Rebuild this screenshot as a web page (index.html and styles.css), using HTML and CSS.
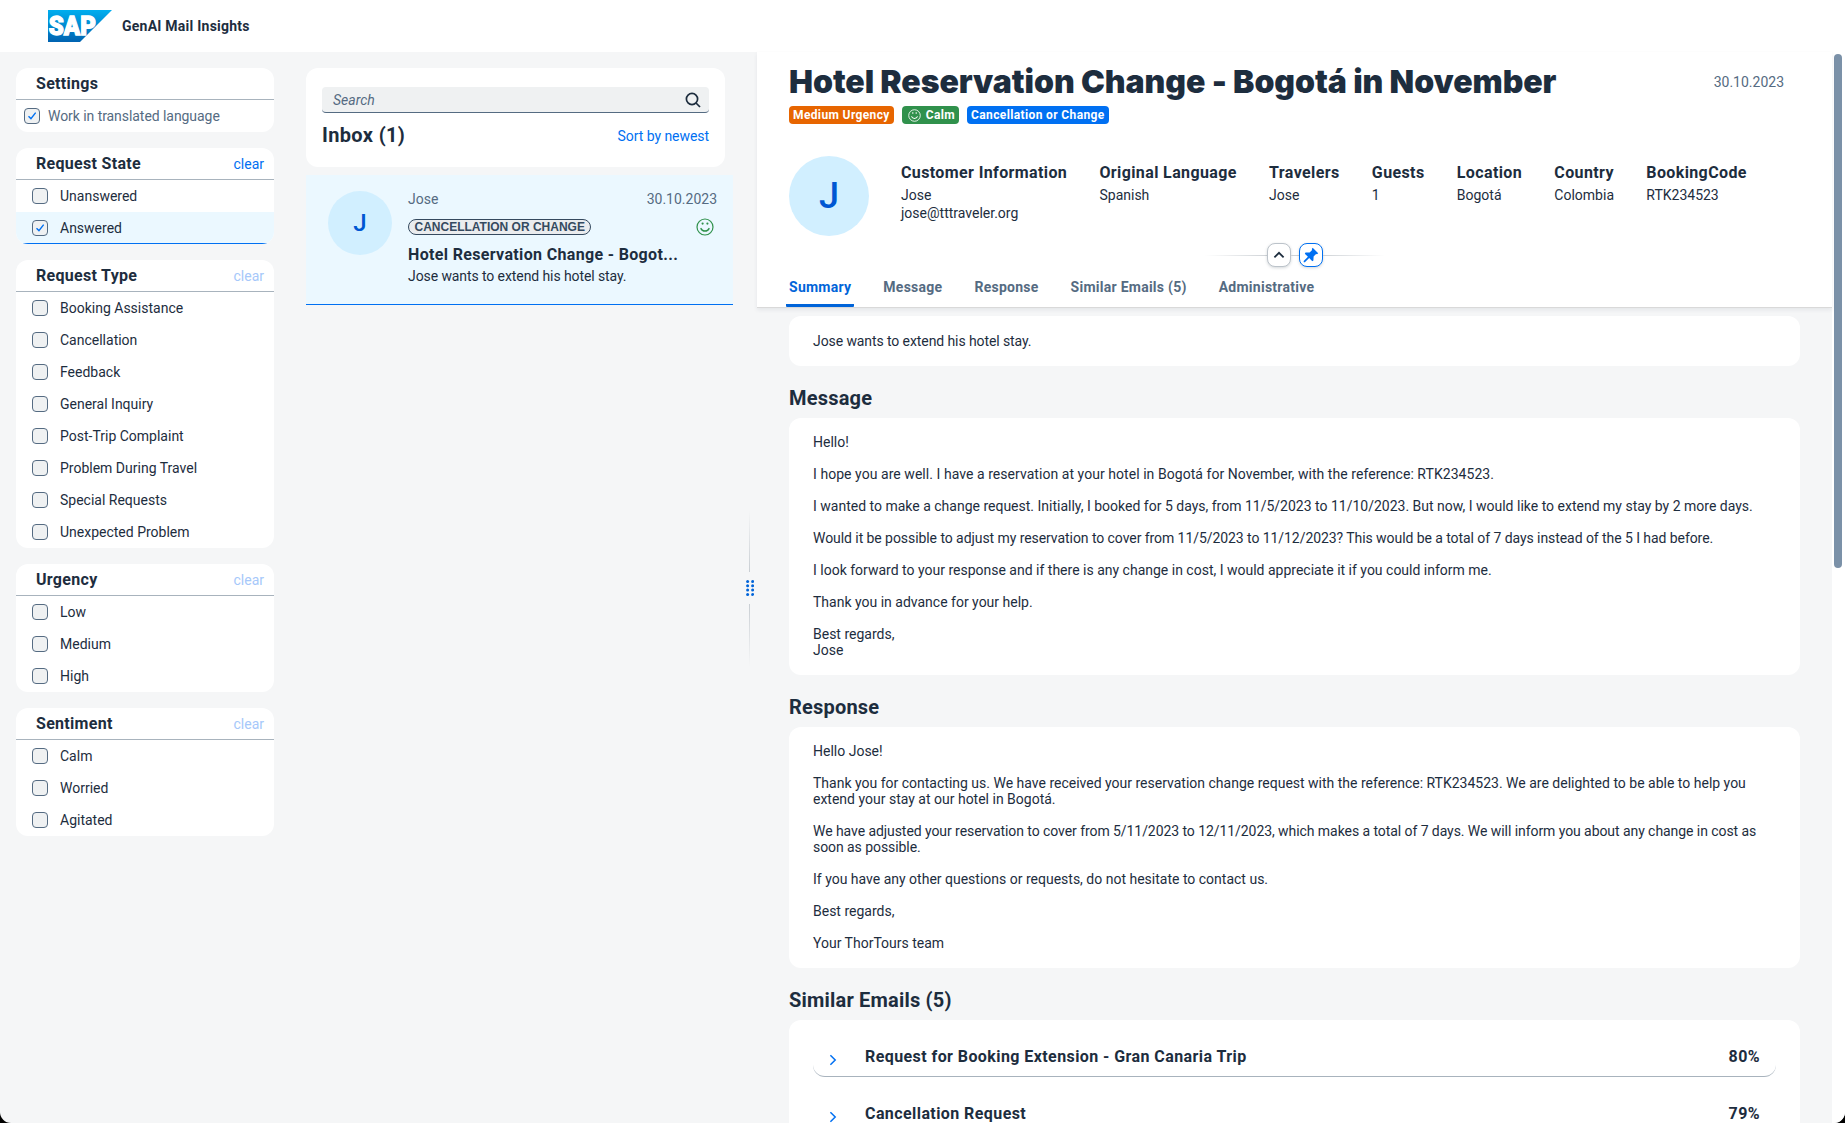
FILE: index.html
```html
<!DOCTYPE html>
<html lang="en">
<head>
<meta charset="utf-8">
<title>GenAI Mail Insights</title>
<link rel="stylesheet" href="styles.css">
</head>
<body>
<svg class="defs" width="0" height="0" aria-hidden="true">
  <symbol id="check" viewBox="0 0 16 16"><path d="M4 8.3 6.8 11 12.2 4.2" fill="none" stroke="#0070f2" stroke-width="1.6"/></symbol>
  <symbol id="smile" viewBox="0 0 18 18"><g fill="none" stroke="currentColor" stroke-width="1.2"><circle cx="9" cy="9" r="8"/><path d="M5 10.6c1.4 3.2 6.6 3.2 8 0" stroke-width="1.4" stroke-linecap="round"/></g><g fill="currentColor"><circle cx="6.6" cy="5.6" r="1.1"/><circle cx="11.4" cy="5.6" r="1.1"/></g></symbol>
  <symbol id="chevron" viewBox="0 0 8 12"><path d="M1.4 1.2 6.2 6 1.4 10.8" fill="none" stroke="#0070f2" stroke-width="1.5"/></symbol>
</svg>
<div class="app">
  <header class="shell">
    <svg class="logo" viewBox="0 0 64 32" width="64" height="32">
      <defs><linearGradient id="g" x1="0" y1="0" x2="0" y2="1"><stop offset="0" stop-color="#00aeef"/><stop offset="1" stop-color="#0063b1"/></linearGradient></defs>
      <path d="M0 0h64L32 32H0z" fill="url(#g)"/>
      <text x="0.8" y="25.300" textLength="47" lengthAdjust="spacingAndGlyphs" class="logo-text">SAP</text>
    </svg>
    <span class="app-name">GenAI Mail Insights</span>
  </header>
  <div class="body">
    <aside class="filters">
      <section class="card">
        <h2>Settings</h2>
        <label class="setting"><span class="box"><svg><use href="#check"/></svg></span>Work in translated language</label>
      </section>
      <section class="card">
        <h2>Request State <a>clear</a></h2>
        <ul><li><span class="box"></span>Unanswered</li><li class="on"><span class="box"><svg><use href="#check"/></svg></span>Answered</li></ul>
      </section>
      <section class="card">
        <h2>Request Type <a class="off">clear</a></h2>
        <ul><li><span class="box"></span>Booking Assistance</li><li><span class="box"></span>Cancellation</li><li><span class="box"></span>Feedback</li><li><span class="box"></span>General Inquiry</li><li><span class="box"></span>Post-Trip Complaint</li><li><span class="box"></span>Problem During Travel</li><li><span class="box"></span>Special Requests</li><li><span class="box"></span>Unexpected Problem</li></ul>
      </section>
      <section class="card">
        <h2>Urgency <a class="off">clear</a></h2>
        <ul><li><span class="box"></span>Low</li><li><span class="box"></span>Medium</li><li><span class="box"></span>High</li></ul>
      </section>
      <section class="card">
        <h2>Sentiment <a class="off">clear</a></h2>
        <ul><li><span class="box"></span>Calm</li><li><span class="box"></span>Worried</li><li><span class="box"></span>Agitated</li></ul>
      </section>
    </aside>
    <div class="inbox">
      <div class="inbox-head">
        <div class="search"><span>Search</span><svg width="16" height="16" viewBox="0 0 16 16" fill="none" stroke="#1d2d3e" stroke-width="1.7"><circle cx="7" cy="7" r="5.6"/><path d="M11 11l4 4"/></svg></div>
        <div class="inbox-row"><h1>Inbox (1)</h1><a>Sort by newest</a></div>
      </div>
      <article class="mail">
        <div class="avatar small">J</div>
        <div class="mail-main">
          <div class="meta"><span>Jose</span><span class="date">30.10.2023</span></div>
          <div class="kind"><span class="badge">CANCELLATION OR CHANGE</span><svg class="smile"><use href="#smile"/></svg></div>
          <h3>Hotel Reservation Change - Bogot...</h3>
          <p>Jose wants to extend his hotel stay.</p>
        </div>
      </article>
    </div>
    <div class="splitter">
      <i class="line up"></i>
      <svg width="8" height="16" viewBox="0 0 8 16" fill="#0064d9"><circle cx="1.6" cy="1.5" r="1.5"/><circle cx="6.6" cy="1.5" r="1.5"/><circle cx="1.6" cy="5.8" r="1.5"/><circle cx="6.6" cy="5.8" r="1.5"/><circle cx="1.6" cy="10.1" r="1.5"/><circle cx="6.6" cy="10.1" r="1.5"/><circle cx="1.6" cy="14.4" r="1.5"/><circle cx="6.6" cy="14.4" r="1.5"/></svg>
      <i class="line down"></i>
    </div>
    <main class="detail">
      <div class="detail-head">
        <div class="title-row"><h1>Hotel Reservation Change - Bogotá in November</h1><span class="date">30.10.2023</span></div>
        <div class="tags"><span class="tag urgent">Medium Urgency</span><span class="tag calm"><svg><use href="#smile"/></svg>Calm</span><span class="tag change">Cancellation or Change</span></div>
        <div class="customer">
          <div class="avatar">J</div>
          <dl>
            <div><dt>Customer Information</dt><dd>Jose<br>jose@tttraveler.org</dd></div>
            <div><dt>Original Language</dt><dd>Spanish</dd></div>
            <div><dt>Travelers</dt><dd>Jose</dd></div>
            <div><dt>Guests</dt><dd>1</dd></div>
            <div><dt>Location</dt><dd>Bogotá</dd></div>
            <div><dt>Country</dt><dd>Colombia</dd></div>
            <div><dt>BookingCode</dt><dd>RTK234523</dd></div>
          </dl>
        </div>
        <div class="pinbar">
          <i class="fade left"></i>
          <button><svg width="12" height="12" viewBox="0 0 12 12"><path d="M1.4 8.4 6 3.8l4.600 4.600" fill="none" stroke="#1d2d3e" stroke-width="1.8"/></svg></button>
          <i class="mid"></i>
          <button class="pin"><svg width="16" height="16" viewBox="0 0 16 16"><path d="M9.700.8 15.200 6.300 14 7.200 13.100 6.900 10.600 9.400 10.400 13.600 9.300 14.200 6.200 11.100 1.900 15.300.7 15.300.7 14.100 4.900 9.800 1.800 6.700 2.500 5.600 6.600 5.400 9.100 2.900 8.800 2z" fill="#0070f2"/></svg></button>
          <i class="fade right"></i>
        </div>
        <nav><a class="active">Summary</a><a>Message</a><a>Response</a><a>Similar Emails (5)</a><a>Administrative</a></nav>
      </div>
      <div class="content">
        <section class="panel">Jose wants to extend his hotel stay.</section>
        <h2>Message</h2>
        <section class="panel">
          <p>Hello!</p>
          <p class="loose">I hope you are well. I have a reservation at your hotel in Bogotá for November, with the reference: RTK234523.</p>
          <p>I wanted to make a change request. Initially, I booked for 5 days, from 11/5/2023 to 11/10/2023. But now, I would like to extend my stay by 2 more days.</p>
          <p class="tight">Would it be possible to adjust my reservation to cover from 11/5/2023 to 11/12/2023? This would be a total of 7 days instead of the 5 I had before.</p>
          <p>I look forward to your response and if there is any change in cost, I would appreciate it if you could inform me.</p>
          <p>Thank you in advance for your help.</p>
          <p>Best regards,<br>Jose</p>
        </section>
        <h2>Response</h2>
        <section class="panel">
          <p>Hello Jose!</p>
          <p>Thank you for contacting us. We have received your reservation change request with the reference: RTK234523. We are delighted to be able to help you<br>extend your stay at our hotel in Bogotá.</p>
          <p class="tight">We have adjusted your reservation to cover from 5/11/2023 to 12/11/2023, which makes a total of 7 days. We will inform you about any change in cost as<br>soon as possible.</p>
          <p>If you have any other questions or requests, do not hesitate to contact us.</p>
          <p>Best regards,</p>
          <p>Your ThorTours team</p>
        </section>
        <h2>Similar Emails (5)</h2>
        <section class="panel similar">
          <div class="sim"><svg width="8" height="12"><use href="#chevron"/></svg><b>Request for Booking Extension - Gran Canaria Trip</b><b class="pct">80%</b></div>
          <div class="sim"><svg width="8" height="12"><use href="#chevron"/></svg><b>Cancellation Request</b><b class="pct">79%</b></div>
        </section>
      </div>
    </main>
    <div class="scrollbar"><div class="thumb"></div></div>
  </div>
</div>
</body>
</html>
```
FILE: styles.css
```css
* { box-sizing: border-box; margin: 0; padding: 0; }
html { background: #000; }
body { font: 14px/16px Roboto, "Liberation Sans", sans-serif; color: #1d2d3e; overflow: hidden; }
ul { list-style: none; }
a { color: #0070f2; }
svg { display: block; flex: none; }
.defs { position: absolute; }

.app { height: 1123px; display: flex; flex-direction: column; background: #f5f6f7; border-radius: 0 0 11px 11px; overflow: hidden; }
.shell { flex: none; height: 52px; background: #fff; display: flex; align-items: center; gap: 10px; padding-left: 48px; }
.logo-text { font: 900 26px Roboto, sans-serif; fill: #fff; stroke: #fff; stroke-width: 1.3px; }
.app-name { font-weight: 700; letter-spacing: .24px; }
.body { flex: 1; min-height: 0; display: flex; }

.filters { width: 306px; padding: 16px 32px 0 16px; display: flex; flex-direction: column; gap: 16px; }
.card { background: #fff; border-radius: 12px; overflow: hidden; }
.card h2 { height: 32px; display: flex; justify-content: space-between; align-items: center; padding: 0 10px 0 20px; border-bottom: 1px solid #a8b3bd; font-size: 16px; letter-spacing: .3px; }
.card h2 a { font-size: 14px; font-weight: 400; letter-spacing: 0; padding-top: 1px; }
.card h2 .off { color: #a6c8fa; }
.card li { height: 32px; display: flex; align-items: center; gap: 12px; padding-left: 16px; }
.card li.on { background: #ebf8ff; border-bottom: 1px solid #0070f2; }
.setting { height: 32px; display: flex; align-items: center; gap: 8px; padding-left: 8px; color: #556b82; letter-spacing: -.06px; }
.box { width: 16px; height: 16px; border: 1px solid #556b82; border-radius: 4px; background: #eff1f2; }
.box svg { width: 14px; height: 14px; }

.inbox { width: 427px; padding-top: 16px; display: flex; flex-direction: column; gap: 8px; }
.inbox-head { width: 419px; height: 99px; padding: 19px 16px 0; background: #fff; border-radius: 12px; }
.search { height: 26px; display: flex; align-items: center; justify-content: space-between; padding: 0 8px 0 11px; background: #eff1f2; border-bottom: 1px solid #556b82; border-radius: 4px; color: #556b82; font-style: italic; }
.inbox-row { display: flex; justify-content: space-between; align-items: center; margin-top: 10px; }
.inbox-row h1 { font-size: 20px; line-height: 24px; letter-spacing: .35px; }
.inbox-row a { padding-top: 2px; letter-spacing: -.05px; }
.mail { height: 130px; display: flex; gap: 16px; padding: 16px 16px 0 22px; background: #ebf8ff; border-bottom: 1px solid #0070f2; }
.avatar { flex: none; width: 80px; height: 80px; border-radius: 50%; background: #d1efff; color: #0057d2; font-size: 36px; font-weight: 500; display: flex; align-items: center; justify-content: center; }
.avatar.small { width: 64px; height: 64px; font-size: 24px; }
.mail-main { flex: 1; }
.meta, .kind { display: flex; justify-content: space-between; align-items: center; }
.meta { color: #556b82; }
.kind { height: 18px; margin: 11px 0 9px; }
.smile { width: 18px; height: 18px; color: #30914c; margin-right: 3px; }
.badge { height: 16px; border: 1px solid #354a5f; border-radius: 8px; padding: 0 5.5px; background: #eaecee; color: #354a5f; font: 700 12px/14px "Liberation Sans", sans-serif; }
.mail h3 { font-size: 16px; line-height: 20px; letter-spacing: .34px; }
.mail p { margin-top: 3px; }
.mail p, .content > .panel:first-child { letter-spacing: -.09px; }

.splitter { width: 24px; display: flex; flex-direction: column; align-items: center; padding: 458px 0 0 9px; gap: 8px; }
.line { width: 1px; height: 62px; }
.up { background: linear-gradient(transparent, #c9ced3); }
.down { background: linear-gradient(#c9ced3, transparent); }

.detail { width: 1075px; display: flex; flex-direction: column; min-height: 0; }
.detail-head { position: relative; flex: none; height: 256px; padding: 12px 32px 0; background: #fff; border-bottom: 1px solid #d9d9d9; box-shadow: 0 2px 4px rgba(34, 53, 72, .08); }
.title-row { display: flex; justify-content: space-between; height: 36px; padding-right: 16px; align-items: center; }
.title-row h1 { font-family: Inter, sans-serif; font-size: 32px; line-height: 36px; font-weight: 900; letter-spacing: -.06px; white-space: nowrap; }
.date { color: #556b82; }
.tags { display: flex; gap: 8px; margin-top: 6px; }
.tag { height: 18px; display: flex; align-items: center; gap: 5px; padding: 0 4px; border-radius: 4px; color: #fff; font-size: 12px; font-weight: 700; letter-spacing: .37px; }
.tag svg { width: 13px; height: 13px; margin-left: 2px; }
.urgent { background: #e76500; }
.calm { background: #30914c; }
.change { background: #0070f2; }
.customer { display: flex; gap: 32px; margin-top: 32px; }
dl { display: flex; gap: 32.3px; padding-top: 7px; }
dt { font-size: 16px; line-height: 20px; font-weight: 700; letter-spacing: .38px; margin-bottom: 3px; }
dd { line-height: 18px; }
.pinbar { height: 24px; margin: 7px 0 0 416px; display: flex; align-items: center; }
.pinbar button { width: 24px; height: 24px; display: flex; align-items: center; justify-content: center; background: #fff; border: 1px solid #bcc3ca; border-radius: 8px; box-shadow: 0 1px 3px rgba(34, 53, 72, .2); }
.pinbar .pin { border-color: #0070f2; }
.fade { width: 62px; height: 1px; }
.left { background: linear-gradient(to right, transparent, #cfd3d7); }
.right { background: linear-gradient(to left, transparent, #cfd3d7); }
.mid { width: 8px; height: 1px; background: #cfd3d7; }
nav { display: flex; gap: 26px; margin-left: -3px; height: 40px; }
nav a { padding: 12px 3px 0; color: #556b82; font-weight: 700; letter-spacing: .26px; }
nav .active { color: #0064d9; border-bottom: 3px solid #0064d9; border-radius: 1px; }

.content { padding: 8px 32px 0; }
.panel { background: #fff; border-radius: 12px; padding: 17px 24px; width: 1011px; }
.content h2 { font-size: 20px; line-height: 24px; letter-spacing: .2px; margin: 20px 0 8px; }
.content > h2 + .panel { padding: 16px 24px 17px; }
.content > .panel { min-height: 50px; }
.panel p { white-space: nowrap; }
.panel p + p { margin-top: 16px; }
.tight { letter-spacing: -.066px; }
.loose { letter-spacing: .05px; }
.content > h2 + .similar { height: 220px; padding: 0 24px; }
.sim { height: 57px; display: flex; align-items: center; padding: 18px 16px 0; border-bottom: 1px solid #a8b3bd; border-radius: 12px; font-size: 16px; letter-spacing: .42px; }
.sim svg { margin: 5px 28px 0 0; }
.pct { margin-left: auto; }

.scrollbar { flex: 1; background: #fff; padding: 2px 3px 0 2px; }
.thumb { height: 514px; border-radius: 4px; background: #7b91a8; }
```
